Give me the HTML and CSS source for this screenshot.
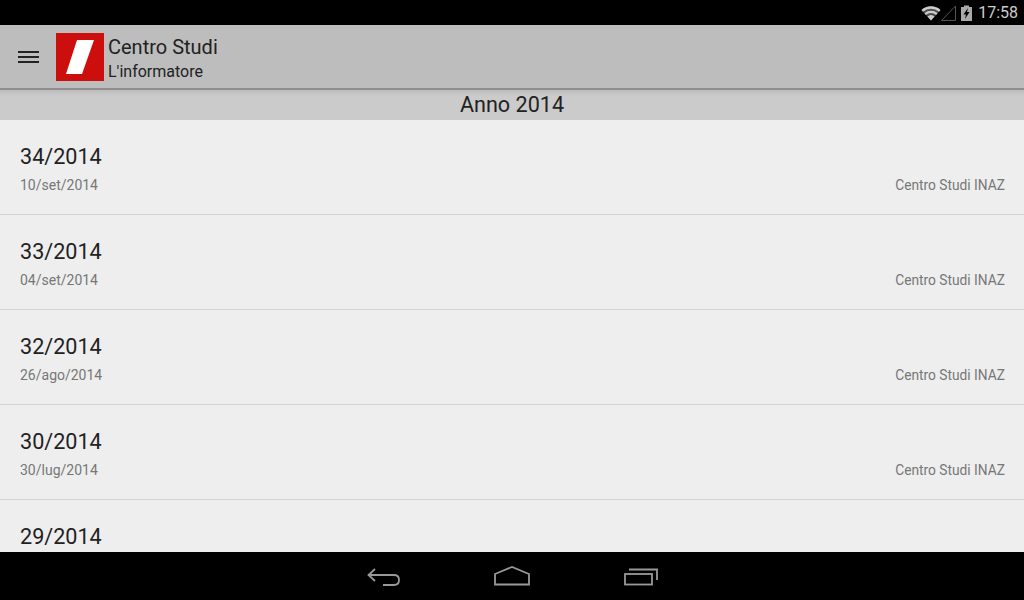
FILE: index.html
```html
<!DOCTYPE html>
<html lang="it">
<head>
  <meta charset="UTF-8" />
  <meta name="viewport" content="width=device-width, initial-scale=1.0" />
  <title>Centro Studi</title>
  <link rel="stylesheet" href="styles.css">
</head>
<body>
  <div class="screen">
    <div class="status-bar">
      <svg class="status-icon" width="20" height="16" viewBox="0 0 20 16">
        <path d="M0.5 5 A14 14 0 0 1 19.5 5 L10 15.5 Z" fill="#fff" opacity="0.3"/>
        <path d="M0.5 5 A14 14 0 0 1 19.5 5 L18 6.7 A12 12 0 0 0 2 6.7 Z" fill="#ccc"/>
        <path d="M3.4 8.2 A10 10 0 0 1 16.6 8.2 L15.1 9.9 A8 8 0 0 0 4.9 9.9 Z" fill="#ccc"/>
        <path d="M6.4 11.5 A5.5 5.5 0 0 1 13.6 11.5 L10 15.5 Z" fill="#ccc"/>
      </svg>
      <svg class="status-icon signal" width="15" height="16" viewBox="0 0 15 16">
        <path d="M0.5 15.5 H14.5 V1 Z" fill="none" stroke="#555" stroke-width="1"/>
      </svg>
      <svg class="status-icon battery" width="11" height="16" viewBox="0 0 11 16">
        <path d="M0 2 H3 V0.5 H8 V2 H11 V16 H0 Z" fill="#aaa"/>
        <path d="M7 3 L2.5 9.5 H5 L4 14 L8.5 7 H6 Z" fill="#000"/>
      </svg>
      <span class="clock">17:58</span>
    </div>

    <header class="action-bar">
      <div class="menu-btn"><span></span><span></span><span></span></div>
      <svg class="logo" width="48" height="48" viewBox="0 0 48 48">
        <rect width="48" height="48" fill="#cc0e0c"/>
        <path d="M21 7 H38 L26 41 H10 Z" fill="#fff"/>
      </svg>
      <div class="titles">
        <div class="title">Centro Studi</div>
        <div class="subtitle">L'informatore</div>
      </div>
    </header>

    <div class="year-head">Anno 2014</div>

    <main class="list">
      <div class="row">
        <div class="row-title">34/2014</div>
        <div class="row-meta"><span>10/set/2014</span><span class="row-source">Centro Studi INAZ</span></div>
      </div>
      <div class="row">
        <div class="row-title">33/2014</div>
        <div class="row-meta"><span>04/set/2014</span><span class="row-source">Centro Studi INAZ</span></div>
      </div>
      <div class="row">
        <div class="row-title">32/2014</div>
        <div class="row-meta"><span>26/ago/2014</span><span class="row-source">Centro Studi INAZ</span></div>
      </div>
      <div class="row">
        <div class="row-title">30/2014</div>
        <div class="row-meta"><span>30/lug/2014</span><span class="row-source">Centro Studi INAZ</span></div>
      </div>
      <div class="row">
        <div class="row-title">29/2014</div>
      </div>
    </main>

    <nav class="nav-bar">
      <svg width="34" height="20" viewBox="0 0 34 20" fill="none" stroke="#999" stroke-width="1.8">
        <path d="M9 3 L2.5 9 L9 15"/>
        <path d="M2.5 9 H28 Q33 9 33 14 Q33 19 28 19 H17"/>
      </svg>
      <svg width="36" height="20" viewBox="0 0 36 20" fill="none" stroke="#999" stroke-width="1.8">
        <path d="M1 18.5 V8 L18 1 L35 8 V18.5 Z"/>
      </svg>
      <svg width="34" height="20" viewBox="0 0 34 20" fill="none" stroke="#999" stroke-width="1.8">
        <rect x="1" y="8" width="27" height="10.5"/>
        <path d="M5 3.5 H33 V14"/>
      </svg>
    </nav>
  </div>
</body>
</html>
```

FILE: styles.css
```css
html, body {
  margin: 0;
  padding: 0;
}

body {
  font-family: Roboto, sans-serif;
  background-color: #000;
}

.screen {
  width: 1024px;
  height: 600px;
  display: flex;
  flex-direction: column;
  overflow: hidden;
}

.status-bar {
  height: 25px;
  flex: none;
  background-color: #000;
  display: flex;
  align-items: center;
  justify-content: flex-end;
  padding-right: 6px;
  box-sizing: border-box;
}

.status-icon {
  display: block;
}

.battery {
  margin-left: 5px;
}

.clock {
  margin-left: 6px;
  color: #ccc;
  font-size: 16px;
}

.action-bar {
  height: 65px;
  flex: none;
  box-sizing: border-box;
  background-color: #bdbdbd;
  border-bottom: 2px solid #8e8e8e;
  display: flex;
  align-items: center;
}

.menu-btn {
  width: 21px;
  margin-left: 18px;
  display: flex;
  flex-direction: column;
  gap: 3px;
}

.menu-btn span {
  display: block;
  height: 2px;
  background-color: #222;
}

.logo {
  margin-left: 17px;
  display: block;
}

.titles {
  margin-left: 4px;
  padding-top: 5px;
  color: #222;
}

.title {
  font-size: 20px;
  line-height: 24px;
  margin-bottom: 1px;
}

.subtitle {
  font-size: 16px;
  line-height: 24px;
}

.year-head {
  height: 30px;
  flex: none;
  background: linear-gradient(#bcbcbc, #cbcbcb 6px);
  color: #222;
  font-size: 21.6px;
  line-height: 30px;
  text-align: center;
}

.list {
  flex: 1;
  min-height: 0;
  overflow: hidden;
  background-color: #eee;
}

.row {
  height: 95px;
  box-sizing: border-box;
  padding: 24px 19px 0 20px;
  border-bottom: 1px solid #d4d4d4;
}

.row-title {
  font-size: 21.6px;
  line-height: 26px;
  color: #222;
}

.row-meta {
  display: flex;
  justify-content: space-between;
  margin-top: 5px;
  font-size: 14px;
  line-height: 20px;
  color: #777;
}

.row-source {
  font-size: 13.75px;
}

.nav-bar {
  height: 48px;
  flex: none;
  background-color: #000;
  display: flex;
  justify-content: center;
  align-items: center;
  gap: 94px;
}
```
